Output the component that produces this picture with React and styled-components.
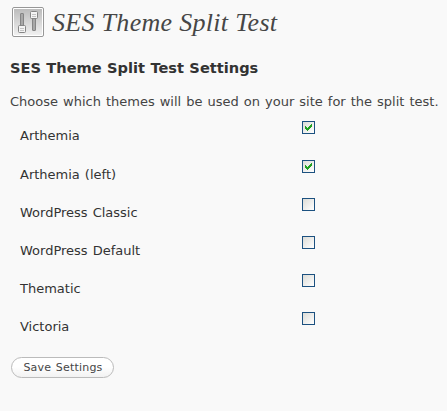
import React, { useState } from "react";
import styled, { createGlobalStyle } from "styled-components";

const GlobalStyle = createGlobalStyle`
  * { box-sizing: border-box; }
  body {
    margin: 0;
    background: #f9f9f9;
    color: #333;
    font-family: Verdana, "DejaVu Sans", sans-serif;
    font-size: 13px;
    word-spacing: 0.9px;
  }
`;

const Page = styled.main`
  width: 447px;
  height: 411px;
  padding: 6px 0 0 10px;
  overflow: hidden;
  white-space: nowrap;
`;

const Header = styled.header`
  display: flex;
  height: 33px;
`;

const HeaderIcon = styled.svg`
  flex: none;
  width: 34px;
  height: 33px;
  margin-left: 1px;
`;

const Title = styled.h1`
  margin: 0 0 0 7px;
  font: italic 26px/34px Georgia, "Liberation Serif", serif;
  letter-spacing: 0.3px;
  word-spacing: 0;
  color: #464646;
`;

const Subtitle = styled.h2`
  margin: 19px 0 0;
  font-size: 14.6px;
  line-height: 20px;
  word-spacing: 0.3px;
`;

const Intro = styled.p`
  margin: 14px 0 0;
  line-height: 20px;
  color: #444;
`;

const ThemeList = styled.div`
  padding-top: 8px;
`;

const ThemeRow = styled.label`
  display: grid;
  grid-template-columns: 282px 13px;
  height: ${(p) => (p.$tall ? 39 : 38)}px;
  padding: 1px 0 0 10px;
`;

const ThemeName = styled.span`
  padding-top: 5px;
  line-height: 20px;
`;

const CheckInput = styled.input`
  appearance: none;
  width: 13px;
  height: 13px;
  margin: 0;
  grid-area: 1 / 2;
  border: 1px solid #1c5180;
  background: linear-gradient(135deg, #dcdcd7, #fff);
`;

const CheckMark = styled.svg`
  grid-area: 1 / 2;
  width: 13px;
  height: 13px;
  pointer-events: none;
`;

const SaveButton = styled.button`
  display: block;
  width: 103px;
  height: 21px;
  margin: 8px 0 0 1px;
  padding: 0 0 0 1px;
  border: 1px solid #bbb;
  border-radius: 11px;
  background: linear-gradient(#fff, #fff 45%, #f2f2f2);
  color: #464646;
  font: 11px/19px Verdana, "DejaVu Sans", sans-serif;
  letter-spacing: 0.2px;
  word-spacing: 0.9px;
`;

const themes = [
  { name: "Arthemia", on: true },
  { name: "Arthemia (left)", on: true },
  { name: "WordPress Classic", on: false },
  { name: "WordPress Default", on: false },
  { name: "Thematic", on: false },
  { name: "Victoria", on: false },
];

function SlidersIcon() {
  return (
    <HeaderIcon viewBox="0 0 34 33" aria-hidden="true">
      <defs>
        <linearGradient id="panel" x1="0" y1="0" x2="0" y2="1">
          <stop offset="0" stopColor="#bcbcbc" />
          <stop offset="1" stopColor="#f0f0f0" />
        </linearGradient>
      </defs>
      <rect x="1.5" y="1.5" width="31" height="29" rx="1.5" fill="#fff" stroke="#979797" />
      <rect x="3" y="3" width="28" height="26" fill="url(#panel)" />
      <rect x="9.5" y="7.5" width="3" height="14" rx="0.5" fill="#a8a8a8" stroke="#858585" />
      <rect x="21.5" y="10.5" width="3" height="14" rx="0.5" fill="#a8a8a8" stroke="#858585" />
      <rect x="7.5" y="19.5" width="7" height="7" rx="1" fill="#f4f4f4" stroke="#858585" />
      <rect x="19.5" y="5.5" width="7" height="7" rx="1" fill="#f4f4f4" stroke="#858585" />
      <path d="M9 22.5h4M9 24.5h4M21 8.5h4M21 10.5h4" stroke="#c4c4c4" />
    </HeaderIcon>
  );
}

function ThemeOption({ name, on, tall }) {
  const [checked, setChecked] = useState(on);
  return (
    <ThemeRow $tall={tall}>
      <ThemeName>{name}</ThemeName>
      <CheckInput type="checkbox" checked={checked} onChange={() => setChecked(!checked)} />
      {checked && (
        <CheckMark viewBox="0 0 13 13" aria-hidden="true">
          <path
            d="M3 5h1v1h1v1h1v-1h1v-1h1v-1h1v-1h1v3h-1v1h-1v1h-1v1h-1v1h-1v-1h-1v-1h-1z"
            fill="#21a121"
            shapeRendering="crispEdges"
          />
        </CheckMark>
      )}
    </ThemeRow>
  );
}

export default function App() {
  return (
    <Page>
      <GlobalStyle />
      <Header>
        <SlidersIcon />
        <Title>SES Theme Split Test</Title>
      </Header>
      <Subtitle>SES Theme Split Test Settings</Subtitle>
      <Intro>Choose which themes will be used on your site for the split test.</Intro>
      <ThemeList>
        {themes.map((t, i) => (
          <ThemeOption key={t.name} name={t.name} on={t.on} tall={i === 0} />
        ))}
      </ThemeList>
      <SaveButton type="button">Save Settings</SaveButton>
    </Page>
  );
}
